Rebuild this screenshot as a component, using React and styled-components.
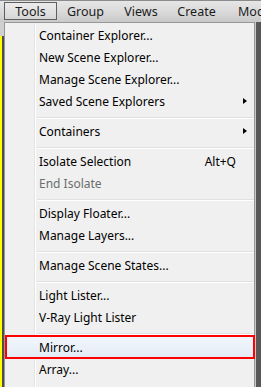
import React from "react";
import styled, { createGlobalStyle } from "styled-components";

const GlobalStyle = createGlobalStyle`
  html, body {
    margin: 0;
    padding: 0;
    width: 261px;
    height: 387px;
    overflow: hidden;
    background: #5a5a5a;
  }
  * {
    box-sizing: border-box;
  }
`;

const Screen = styled.div`
  width: 261px;
  height: 387px;
  display: flex;
  flex-direction: column;
  overflow: hidden;
  font-family: "Noto Sans", "Open Sans", sans-serif;
  font-size: 12px;
  color: #000;
`;

const MenuBar = styled.div`
  height: 22px;
  flex: none;
  display: flex;
  align-items: flex-start;
  padding: 2px 0 0 4px;
  border-top: 1px solid #8c8c8c;
  background: linear-gradient(to bottom, #e6e6e6 0%, #dadada 50%, #c9c9c9 100%);
  overflow: hidden;
`;

const BarItem = styled.div`
  width: ${(p) => p.w}px;
  height: 18px;
  flex: none;
  display: flex;
  align-items: center;
  justify-content: ${(p) => (p.w ? "center" : "flex-start")};
  padding: ${(p) => (p.w ? "0" : "0 0 0 12px")};
  white-space: nowrap;
  border: 1px solid ${(p) => (p.open ? "#5e5e5e" : "transparent")};
  background: ${(p) =>
    p.open ? "linear-gradient(to bottom, #ececec, #d6d6d6)" : "transparent"};
  color: #1b1b1b;
  font-size: 12.5px;
  margin-top: -1px;
`;

const Body = styled.div`
  flex: 1;
  display: flex;
  min-height: 0;
`;

const LeftStrip = styled.div`
  width: 4px;
  flex: none;
  display: flex;
  flex-direction: column;
  background: #4d4d4d;
`;

const LeftTop = styled.div`
  height: 14px;
  background: #cfcfcf;
`;

const Yellow = styled.div`
  flex: 1;
  width: 2px;
  background: #ffff00;
`;

const RightStrip = styled.div`
  width: 6px;
  flex: none;
  border-left: 1px solid #c9c9c9;
  background: #585858;
`;

const Menu = styled.div`
  flex: 1;
  border: 1px solid #979797;
  border-bottom: none;
  padding: 1px 0 0 1px;
  background: linear-gradient(
    to right,
    #f0f0f0 29px,
    #e2e3e3 29px,
    #e2e3e3 30px,
    #ffffff 30px,
    #ffffff 31px,
    #f0f0f0 31px
  );
  display: flex;
  flex-direction: column;
`;

const Row = styled.div`
  height: 22px;
  flex: none;
  display: flex;
  align-items: center;
  padding-left: 33px;
  white-space: nowrap;
  color: ${(p) => (p.disabled ? "#6d6d6d" : "#000")};
  background: ${(p) =>
    p.active ? "linear-gradient(to bottom, #f3f7fc, #e3ebf6)" : "transparent"};
  outline: ${(p) => (p.marked ? "2px solid #ff0000" : "none")};
  outline-offset: -1px;
`;

const Label = styled.span`
  flex: 1;
`;

const Shortcut = styled.span`
  padding-right: 1px;
`;

const ArrowCell = styled.span`
  width: 17px;
  flex: none;
  display: flex;
  align-items: center;
  padding-left: 6px;
`;

const Arrow = styled.span`
  width: 0;
  height: 0;
  border-top: 3.5px solid transparent;
  border-bottom: 3.5px solid transparent;
  border-left: 4px solid #000;
`;

const Separator = styled.div`
  height: 8px;
  flex: none;
  padding: 5px 0 0 31px;
  &::before {
    content: "";
    display: block;
    height: 1px;
    background: #e0e0e0;
    border-bottom: 1px solid #ffffff;
    box-sizing: content-box;
  }
`;

const bar = [
  { label: "Tools", w: 53 },
  { label: "Group", w: 57 },
  { label: "Views", w: 54 },
  { label: "Create", w: 57 },
  { label: "Mod" },
];

const items = [
  { label: "Container Explorer..." },
  { label: "New Scene Explorer..." },
  { label: "Manage Scene Explorer..." },
  { label: "Saved Scene Explorers", sub: true },
  "-",
  { label: "Containers", sub: true },
  "-",
  { label: "Isolate Selection", shortcut: "Alt+Q" },
  { label: "End Isolate", disabled: true },
  "-",
  { label: "Display Floater..." },
  { label: "Manage Layers..." },
  "-",
  { label: "Manage Scene States..." },
  "-",
  { label: "Light Lister..." },
  { label: "V-Ray Light Lister" },
  "-",
  { label: "Mirror...", active: true, marked: true },
  { label: "Array..." },
];

export default function App() {
  return (
    <>
      <GlobalStyle />
      <Screen>
        <MenuBar>
          {bar.map((b, i) => (
            <BarItem key={b.label} w={b.w} open={i === 0}>
              {b.label}
            </BarItem>
          ))}
        </MenuBar>
        <Body>
          <LeftStrip>
            <LeftTop />
            <Yellow />
          </LeftStrip>
          <Menu>
            {items.map((it, i) =>
              it === "-" ? (
                <Separator key={i} />
              ) : (
                <Row
                  key={i}
                  disabled={it.disabled}
                  active={it.active}
                  marked={it.marked}
                >
                  <Label>{it.label}</Label>
                  {it.shortcut && <Shortcut>{it.shortcut}</Shortcut>}
                  <ArrowCell>{it.sub && <Arrow />}</ArrowCell>
                </Row>
              )
            )}
          </Menu>
          <RightStrip />
        </Body>
      </Screen>
    </>
  );
}
